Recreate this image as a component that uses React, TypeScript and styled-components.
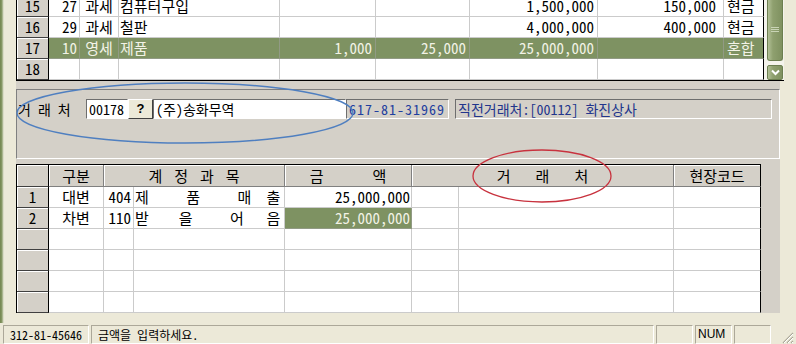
import styled, { createGlobalStyle } from "styled-components";

const MONO = `"Noto Sans Mono CJK KR", "DejaVu Sans Mono", "Noto Sans CJK KR", monospace`;

const GlobalStyle = createGlobalStyle`
  html, body {
    margin: 0;
    padding: 0;
    background: #ece9d8;
  }
  body {
    font-family: ${MONO};
  }
`;

const Screen = styled.div`
  position: relative;
  width: 796px;
  height: 344px;
  overflow: hidden;
  background: #ece9d8;
  display: flex;
  flex-direction: column;
  color: #000;
  font-family: ${MONO};
`;

const Body = styled.div`
  display: flex;
  height: 323px;
`;

const FrameEdge = styled.div`
  width: 4px;
  background: linear-gradient(to right, #72854f 0, #8a9b68 2px, #c9cfb4 3px, #ece9d8 4px);
`;

const Work = styled.div`
  flex: 1;
  padding-left: 12px;
  display: flex;
  flex-direction: column;
`;

/* ---------- top grid ---------- */

const TopGrid = styled.div`
  display: flex;
  width: 767px;
  height: 80px;
  border-left: 1px solid #000;
  border-bottom: 1px solid #000;
  overflow: hidden;
  background: #fff;
`;

const GridBody = styled.div`
  width: 747px;
  margin-top: -4px;
  display: flex;
  flex-direction: column;
`;

const Row = styled.div<{ $selected?: boolean; $h?: number }>`
  display: flex;
  height: ${(p) => p.$h ?? 21}px;
  background: ${(p) => (p.$selected ? "#7e9262" : "#fff")};
  color: ${(p) => (p.$selected ? "#f2f2e6" : "#000")};
`;

const Cell = styled.div<{
  $w: number;
  $align?: "left" | "right" | "center";
  $pad?: number;
  $edge?: boolean;
  $fill?: string;
  $size?: number;
}>`
  width: ${(p) => p.$w}px;
  box-sizing: border-box;
  flex-shrink: 0;
  border-right: 1px solid ${(p) => (p.$edge ? "#000" : "rgba(160,160,160,0.55)")};
  border-bottom: 1px solid rgba(160, 160, 160, 0.55);
  padding: 0 ${(p) => p.$pad ?? 2}px;
  text-align: ${(p) => p.$align ?? "left"};
  font-size: ${(p) => p.$size ?? 15}px;
  line-height: 20px;
  white-space: pre;
  overflow: hidden;
  background: ${(p) => p.$fill ?? "transparent"};
  color: ${(p) => (p.$fill ? "#f2f2e6" : "inherit")};
`;

const HeadCell = styled.div<{ $w: number; $h?: number }>`
  width: ${(p) => p.$w}px;
  height: ${(p) => p.$h ?? 21}px;
  box-sizing: border-box;
  flex-shrink: 0;
  background: #d4d0c8;
  border-right: 1px solid #000;
  border-bottom: 1px solid #404040;
  box-shadow: inset 1px 1px #fff;
  color: #000;
  font-size: 15px;
  line-height: 20px;
  text-align: center;
`;

const VScroll = styled.div`
  width: 20px;
  box-sizing: border-box;
  padding: 0 1px 0 3px;
  background: #f4f3ec;
  display: flex;
  flex-direction: column;
`;

const Thumb = styled.div`
  height: 63px;
  box-sizing: border-box;
  background: linear-gradient(to right, #b2c096, #8fa06f 35%, #7f9160);
  border: 1px solid #6c7e50;
  border-top: none;
  border-radius: 0 0 3px 3px;
  display: flex;
  align-items: center;
  justify-content: center;
`;

const ArrowButton = styled.div`
  margin-top: 4px;
  height: 14px;
  background: linear-gradient(to right, #b2c096, #8fa06f 35%, #7f9160);
  border: 1px solid #6c7e50;
  border-radius: 2px;
  display: flex;
  align-items: center;
  justify-content: center;
`;

/* ---------- lower area ---------- */

const Lower = styled.div`
  width: 764px;
  height: 232px;
  background: #d4d0c8;
  display: flex;
  flex-direction: column;
`;

const Panel = styled.div`
  margin-top: 8px;
  height: 70px;
  box-sizing: border-box;
  border-top: 1px solid #808080;
  border-left: 1px solid #808080;
  border-right: 1px solid #fff;
  border-bottom: 1px solid #fff;
  padding: 9px 0 0 1px;
`;

const ControlRow = styled.div`
  display: flex;
  height: 20px;
  align-items: stretch;
  font-size: 14px;
`;

const Label = styled.div`
  width: 68px;
  line-height: 20px;
  white-space: pre;
`;

const Field = styled.div<{ $w: number; $white?: boolean; $color?: string; $gap?: number; $spacing?: number }>`
  width: ${(p) => p.$w}px;
  margin-left: ${(p) => p.$gap ?? 0}px;
  box-sizing: border-box;
  background: ${(p) => (p.$white ? "#fff" : "#d4d0c8")};
  border-top: 1px solid #6e6e6e;
  border-left: 1px solid #6e6e6e;
  border-right: 1px solid #fff;
  border-bottom: 1px solid #fff;
  padding-left: 2px;
  line-height: 18px;
  color: ${(p) => p.$color ?? "#000"};
  letter-spacing: ${(p) => p.$spacing ?? 0}px;
  white-space: pre;
  overflow: hidden;
`;

const LookupButton = styled.div`
  width: 25px;
  box-sizing: border-box;
  background: #ece9d8;
  border-top: 1px solid #fff;
  border-left: 1px solid #fff;
  border-right: 1px solid #404040;
  border-bottom: 1px solid #404040;
  font-family: "Liberation Sans", sans-serif;
  font-weight: bold;
  font-size: 13px;
  line-height: 18px;
  text-align: center;
`;

const BottomGrid = styled.div`
  margin-top: 5px;
  width: 744px;
  border-left: 1px solid #000;
  border-top: 1px solid #000;
  background: #fff;
  display: flex;
  flex-direction: column;
`;

const ColTitle = styled.div<{ $w: number; $gap?: number; $edge?: boolean }>`
  width: ${(p) => p.$w}px;
  height: 22px;
  box-sizing: border-box;
  background: #d4d0c8;
  border-right: 1px solid ${(p) => (p.$edge ? "#000" : "#808080")};
  border-bottom: 1px solid #808080;
  box-shadow: inset 1px 1px #fff;
  display: flex;
  justify-content: center;
  align-items: center;
  gap: ${(p) => p.$gap ?? 0}px;
  font-size: 15px;
`;

/* ---------- status bar ---------- */

const StatusBar = styled.div`
  height: 21px;
  box-sizing: border-box;
  padding: 2px 0 0 3px;
  display: flex;
  gap: 2px;
  font-size: 12px;
`;

const Pane = styled.div<{ $w: number; $sans?: boolean }>`
  width: ${(p) => p.$w}px;
  box-sizing: border-box;
  border-top: 1px solid #aca899;
  border-left: 1px solid #aca899;
  border-right: 1px solid #fff;
  border-bottom: 1px solid #fff;
  padding-left: ${(p) => (p.$sans ? 2 : 6)}px;
  line-height: 17px;
  font-family: ${(p) => (p.$sans ? `"Liberation Sans", sans-serif` : MONO)};
  white-space: pre;
`;

const Grip = styled.div`
  margin-left: auto;
  width: 16px;
  display: flex;
  align-items: flex-end;
`;

const Annotation = styled.svg`
  position: absolute;
  left: 0;
  top: 0;
  pointer-events: none;
`;

type Align = "left" | "right" | "center";

const topCols: { w: number; align: Align; pad?: number }[] = [
  { w: 31, align: "right", pad: 2 },
  { w: 39, align: "center" },
  { w: 161, align: "left", pad: 1 },
  { w: 96, align: "right", pad: 3 },
  { w: 94, align: "right", pad: 3 },
  { w: 128, align: "right", pad: 3 },
  { w: 126, align: "right", pad: 7 },
  { w: 40, align: "left", pad: 3 },
];

const topRows = [
  { no: 15, cells: ["27", "과세", "컴퓨터구입", "", "", "1,500,000", "150,000", "현금"] },
  { no: 16, cells: ["29", "과세", "철판", "", "", "4,000,000", "400,000", "현금"] },
  { no: 17, cells: ["10", "영세", "제품", "1,000", "25,000", "25,000,000", "", "혼합"], selected: true },
  { no: 18, cells: ["", "", "", "", "", "", "", ""] },
];

const entries = [
  { no: "1", side: "대변", code: "404", name: "제     품     매  출", amount: "25,000,000", active: false },
  { no: "2", side: "차변", code: "110", name: "받    을     어   음", amount: "25,000,000", active: true },
  { no: "", side: "", code: "", name: "", amount: "", active: false },
  { no: "", side: "", code: "", name: "", amount: "", active: false },
  { no: "", side: "", code: "", name: "", amount: "", active: false },
  { no: "", side: "", code: "", name: "", amount: "", active: false },
];

const App = () => {
  return (
    <Screen>
      <GlobalStyle />
      <Body>
        <FrameEdge />
        <Work>
          <TopGrid>
            <GridBody>
              {topRows.map((r) => (
                <Row key={r.no} $selected={r.selected}>
                  <HeadCell $w={32}>{r.no}</HeadCell>
                  {r.cells.map((c, i) => (
                    <Cell
                      key={i}
                      $w={topCols[i].w}
                      $align={topCols[i].align}
                      $pad={topCols[i].pad}
                      $edge={i === topCols.length - 1}
                    >
                      {c}
                    </Cell>
                  ))}
                </Row>
              ))}
            </GridBody>
            <VScroll>
              <Thumb>
                <svg width="8" height="7" viewBox="0 0 8 7">
                  <path d="M0 1.5h8M0 3.5h8M0 5.5h8" stroke="#c9d4b5" strokeWidth="1" />
                </svg>
              </Thumb>
              <ArrowButton>
                <svg width="9" height="7" viewBox="0 0 9 7">
                  <path d="M1 1.5l3.5 3.5 3.5-3.5" fill="none" stroke="#fff" strokeWidth="2" />
                </svg>
              </ArrowButton>
            </VScroll>
          </TopGrid>

          <Lower>
            <Panel>
              <ControlRow>
                <Label>거 래 처</Label>
                <Field $w={42} $white>00178</Field>
                <LookupButton>?</LookupButton>
                <Field $w={193} $white>(주)송화무역</Field>
                <Field $w={103} $color="#1f3f9f" $spacing={1}>617-81-31969</Field>
                <Field $w={317} $gap={6} $color="#22358c">직전거래처:[00112] 화진상사</Field>
              </ControlRow>
            </Panel>

            <BottomGrid>
              <Row $h={22}>
                <HeadCell $w={32} $h={22} />
                <ColTitle $w={55}>구분</ColTitle>
                <ColTitle $w={181} $gap={12}>
                  <span>계</span>
                  <span>정</span>
                  <span>과</span>
                  <span>목</span>
                </ColTitle>
                <ColTitle $w={127} $gap={49}>
                  <span>금</span>
                  <span>액</span>
                </ColTitle>
                <ColTitle $w={262} $gap={25}>
                  <span>거</span>
                  <span>래</span>
                  <span>처</span>
                </ColTitle>
                <ColTitle $w={87} $edge>현장코드</ColTitle>
              </Row>
              {entries.map((e, i) => (
                <Row key={i}>
                  <HeadCell $w={32}>{e.no}</HeadCell>
                  <Cell $w={55} $align="center">{e.side}</Cell>
                  <Cell $w={30} $align="right" $pad={2}>{e.code}</Cell>
                  <Cell $w={151} $pad={1}>{e.name}</Cell>
                  <Cell $w={127} $align="right" $pad={1} $fill={e.active ? "#7e9262" : undefined}>
                    {e.amount}
                  </Cell>
                  <Cell $w={47} />
                  <Cell $w={215} />
                  <Cell $w={87} $edge />
                </Row>
              ))}
            </BottomGrid>
          </Lower>
        </Work>
      </Body>

      <StatusBar>
        <Pane $w={86}>312-81-45646</Pane>
        <Pane $w={563}>금액을 입력하세요.</Pane>
        <Pane $w={37} />
        <Pane $w={37} $sans>NUM</Pane>
        <Pane $w={37} />
        <Grip>
          <svg width="14" height="14" viewBox="0 0 14 14">
            <path d="M13 3L3 13M13 7L7 13M13 11L11 13" stroke="#aca899" strokeWidth="1.2" />
            <path d="M13 4L4 13M13 8L8 13M13 12L12 13" stroke="#fff" strokeWidth="1" />
          </svg>
        </Grip>
      </StatusBar>

      <Annotation width="796" height="344">
        <ellipse cx="185" cy="113" rx="168" ry="30" fill="none" stroke="#4f7fc0" strokeWidth="1.4" />
        <ellipse cx="542" cy="176" rx="69" ry="26" fill="none" stroke="#c8323e" strokeWidth="1.3" />
      </Annotation>
    </Screen>
  );
};

export default App;
